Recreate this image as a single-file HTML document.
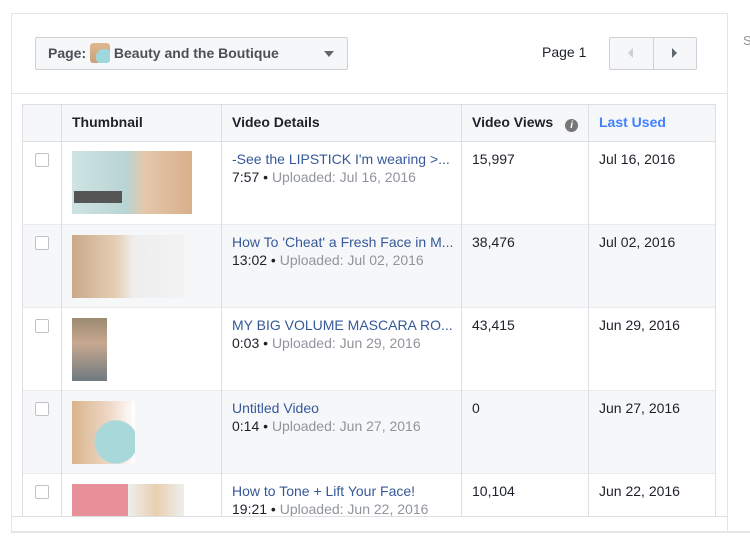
<!DOCTYPE html>
<html><head><style>
*{box-sizing:border-box;margin:0;padding:0}
body{width:750px;height:542px;background:#fff;font-family:"Liberation Sans",Helvetica,sans-serif;position:relative;overflow:hidden;color:#1d2129}
.abs{position:absolute}
.panel{left:11px;top:13px;width:717px;height:520px;border:1px solid #e5e5e5;border-bottom:none}
.hdrline{left:11px;top:93px;width:717px;height:1px;background:#e5e5e5}
.sel{left:35px;top:37px;width:313px;height:33px;border:1px solid #ced0d4;border-radius:2px;background:#f6f7f9;font-size:14px;font-weight:bold;color:#4b4f56;line-height:31px;padding-left:12px}
.tbl{left:22px;top:104px;width:694px;height:412px;border:1px solid #dddfe2;border-bottom:none;overflow:hidden}
.th{position:absolute;top:0;height:37px;background:#f6f7f9;border-bottom:1px solid #dddfe2;font-size:14px;font-weight:bold;line-height:35px}
.vl{position:absolute;top:0;width:1px;height:412px;background:#dddfe2}
.row{position:absolute;left:0;width:694px;height:83px;border-bottom:1px solid #e9ebee}
.cb{position:absolute;left:12px;top:11px;width:14px;height:14px;border:1px solid #bec3c9;border-radius:2px;background:#fff}
.t{position:absolute;font-size:14px;line-height:18px}
.lnk{color:#365899}
.sub{color:#90949c}
</style></head><body>
<div class="abs panel"></div>
<div class="abs hdrline"></div>
<div class="abs sel">Page: <span style="display:inline-block;width:20px;height:20px;vertical-align:-5px;background:radial-gradient(circle at 70% 70%,#9fd8dc 40%,transparent 42%),linear-gradient(#e0b890,#c9a07a);border-radius:3px"></span> Beauty and the Boutique
<span style="position:absolute;left:288px;top:13px;border:5px solid transparent;border-top:6px solid #606770"></span></div>
<div class="abs" style="left:542px;top:44px;font-size:14px">Page 1</div>
<div class="abs" style="left:609px;top:37px;width:88px;height:33px;border:1px solid #ced0d4;border-radius:2px;background:#f6f7f9">
<div style="position:absolute;left:43px;top:0;width:1px;height:31px;background:#ced0d4"></div>
<span style="position:absolute;left:18px;top:10px;border:5px solid transparent;border-right:5px solid #ccd0d5;border-left:none"></span>
<span style="position:absolute;left:62px;top:10px;border:5px solid transparent;border-left:5px solid #606770;border-right:none"></span>
</div>
<div class="abs" style="left:743px;top:33px;font-size:13px;color:#90949c">S</div>
<div class="abs tbl">
<div class="th" style="left:0;width:694px"></div>
<div class="th" style="left:49px">Thumbnail</div>
<div class="th" style="left:209px">Video Details</div>
<div class="th" style="left:449px">Video Views <span style="display:inline-block;width:13px;height:13px;border-radius:50%;background:#777;color:#fff;font-size:10px;line-height:13px;text-align:center;font-style:italic;margin-left:8px;vertical-align:-1px">i</span></div>
<div class="th" style="left:576px;color:#4080ff">Last Used</div>

<div class="row" style="top:37px;background:#fff">
<div class="cb"></div>
<div class="abs" style="left:49px;top:9px;width:120px;height:63px;background:linear-gradient(90deg,#cfe3e3 0,#b8d4d4 45%,#e4c7ad 60%,#d8b08a 100%)"><div style="position:absolute;left:2px;top:40px;width:48px;height:12px;background:#555"></div></div>
<div class="t lnk" style="left:209px;top:8px">-See the LIPSTICK I'm wearing &gt;...</div>
<div class="t" style="left:209px;top:26px">7:57 • <span class="sub">Uploaded: Jul 16, 2016</span></div>
<div class="t" style="left:449px;top:8px">15,997</div>
<div class="t" style="left:576px;top:8px">Jul 16, 2016</div>
</div>
<div class="row" style="top:120px;background:#f6f7f9">
<div class="cb"></div>
<div class="abs" style="left:49px;top:10px;width:112px;height:63px;background:linear-gradient(90deg,#c9a98a 0,#e6cfb5 40%,#eee 55%,#f3f3f3 100%)"></div>
<div class="t lnk" style="left:209px;top:8px">How To 'Cheat' a Fresh Face in M...</div>
<div class="t" style="left:209px;top:26px">13:02 • <span class="sub">Uploaded: Jul 02, 2016</span></div>
<div class="t" style="left:449px;top:8px">38,476</div>
<div class="t" style="left:576px;top:8px">Jul 02, 2016</div>
</div>
<div class="row" style="top:203px;background:#fff">
<div class="cb"></div>
<div class="abs" style="left:49px;top:10px;width:35px;height:63px;background:linear-gradient(#9a8a70,#c8a890 40%,#6f7a80)"></div>
<div class="t lnk" style="left:209px;top:8px">MY BIG VOLUME MASCARA RO...</div>
<div class="t" style="left:209px;top:26px">0:03 • <span class="sub">Uploaded: Jun 29, 2016</span></div>
<div class="t" style="left:449px;top:8px">43,415</div>
<div class="t" style="left:576px;top:8px">Jun 29, 2016</div>
</div>
<div class="row" style="top:286px;background:#f6f7f9">
<div class="cb"></div>
<div class="abs" style="left:49px;top:10px;width:63px;height:63px;background:radial-gradient(circle at 70% 65%,#a9d8da 35%,transparent 37%),linear-gradient(90deg,#d8b48c,#f0d8c8 60%,#fff)"></div>
<div class="t lnk" style="left:209px;top:8px">Untitled Video</div>
<div class="t" style="left:209px;top:26px">0:14 • <span class="sub">Uploaded: Jun 27, 2016</span></div>
<div class="t" style="left:449px;top:8px">0</div>
<div class="t" style="left:576px;top:8px">Jun 27, 2016</div>
</div>
<div class="row" style="top:369px;background:#fff">
<div class="cb"></div>
<div class="abs" style="left:49px;top:10px;width:56px;height:40px;background:#e8909a"></div>
<div class="abs" style="left:105px;top:10px;width:56px;height:40px;background:linear-gradient(90deg,#eee,#e8d0b0,#eee)"></div>
<div class="t lnk" style="left:209px;top:8px">How to Tone + Lift Your Face!</div>
<div class="t" style="left:209px;top:26px">19:21 • <span class="sub">Uploaded: Jun 22, 2016</span></div>
<div class="t" style="left:449px;top:8px">10,104</div>
<div class="t" style="left:576px;top:8px">Jun 22, 2016</div>
</div>
<div class="vl" style="left:38px"></div>
<div class="vl" style="left:198px"></div>
<div class="vl" style="left:438px"></div>
<div class="vl" style="left:565px"></div>
</div>
<div class="abs" style="left:11px;top:516px;width:717px;height:1px;background:#dddfe2"></div>
<div class="abs" style="left:11px;top:531px;width:739px;height:2px;background:#e5e5e5"></div>
</body></html>
